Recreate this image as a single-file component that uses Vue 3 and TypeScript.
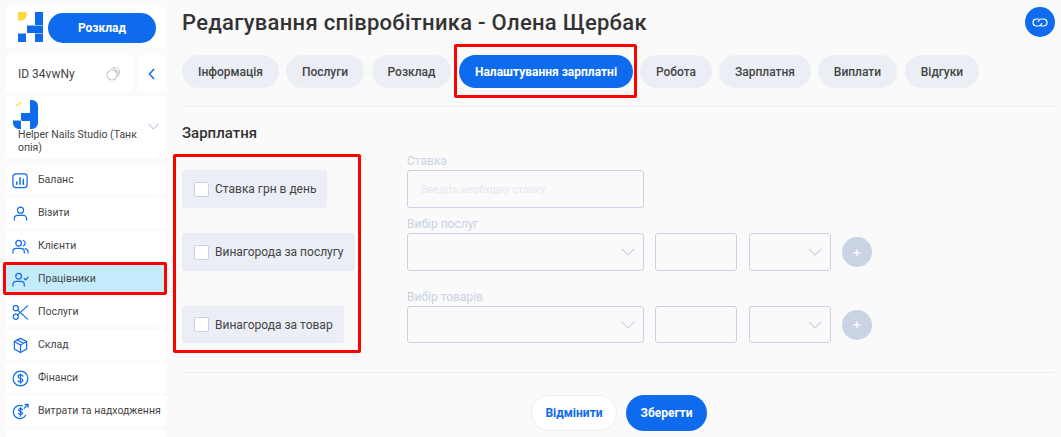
<script setup lang="ts">
const tabs = [
  { label: 'Інформація', width: 97 },
  { label: 'Послуги', width: 78 },
  { label: 'Розклад', width: 79 },
  { label: 'Налаштування зарплатні', width: 174, active: true },
  { label: 'Робота', width: 72 },
  { label: 'Зарплатня', width: 92 },
  { label: 'Виплати', width: 79 },
  { label: 'Відгуки', width: 74 },
]

const nav = [
  { label: 'Баланс', icon: 'chart' },
  { label: 'Візити', icon: 'user' },
  { label: 'Клієнти', icon: 'users' },
  { label: 'Працівники', icon: 'staff', active: true },
  { label: 'Послуги', icon: 'scissors' },
  { label: 'Склад', icon: 'box' },
  { label: 'Фінанси', icon: 'dollar' },
  { label: 'Витрати та надходження', icon: 'flow' },
  { label: '', icon: '' },
]

const rows = ['Вибір послуг', 'Вибір товарів']
</script>

<template>
  <div class="page">
    <aside class="side">
      <div class="card top">
        <svg class="logo" width="25" height="30" viewBox="0 0 25 30">
          <path d="M0 0h8.500v3.500a5 5 0 0 1-5 5H0z" fill="#fbd93c" />
          <rect x="17" y="0" width="8" height="13" fill="#0f6bee" />
          <rect x="9" y="13.500" width="16" height="7.500" fill="#0f6bee" />
          <rect x="0" y="21.500" width="8" height="8.500" fill="#0f6bee" />
          <rect x="17" y="21.500" width="8" height="8.500" fill="#0f6bee" />
        </svg>
        <button class="schedule" type="button">Розклад</button>
      </div>
      <div class="id-row">
        <div class="card id-card">
          <span>ID 34vwNy</span>
          <svg width="15" height="15" viewBox="0 0 15 15" fill="none" stroke="#c4cbd6" stroke-width="1.200">
            <circle cx="6" cy="9" r="5" />
            <path d="M5 3.500A5 5 0 0 1 9 1.500a4.500 4.500 0 0 1 4.500 4.500 5 5 0 0 1-2 4" />
            <path d="M8 2.500l3 3.500M10 4.500l2.500 2.500" />
          </svg>
        </div>
        <div class="card back">
          <svg width="8" height="12" viewBox="0 0 8 12" fill="none" stroke="#0f6bee" stroke-width="1.500"><path d="M6 1L1.500 6 6 11" /></svg>
        </div>
      </div>
      <div class="card studio">
        <div class="studio-text">
          <svg width="25" height="29" viewBox="0 0 25 29">
            <path d="M17 0h2a6 6 0 0 1 6 6v17a6 6 0 0 1-6 6h-2v-8H8v8H6a6 6 0 0 1-6-6v-3h8v-7h9z" fill="#0f6bee" />
            <path d="M3 6l5-4" stroke="#fbd93c" stroke-width="1.500" />
            <path d="M8 21v-1M0 20h8" stroke="#fff" />
          </svg>
          <p>Helper Nails Studio (Танк опія)</p>
        </div>
        <svg class="studio-arrow" width="11" height="7" viewBox="0 0 11 7" fill="none" stroke="#c9d3e3" stroke-width="1.200"><path d="M.5 1l5 5 5-5" /></svg>
      </div>
      <nav class="nav">
        <a v-for="item in nav" :key="item.label" class="nav-item" :class="{ active: item.active }">
          <svg width="17" height="17" viewBox="0 0 18 18" fill="none" stroke="#0f6bee" stroke-width="1.300" stroke-linecap="round" stroke-linejoin="round">
            <template v-if="item.icon === 'chart'">
              <rect x="1" y="2" width="15" height="14.500" rx="3" />
              <path d="M5 13v-2.500M8.500 13V6M12 13V8" stroke-width="1.600" />
            </template>
            <template v-else-if="item.icon === 'user'">
              <circle cx="9" cy="5.500" r="3.200" />
              <path d="M2.500 16v-1.500a3.500 3.500 0 0 1 3.500-3.500h6a3.500 3.500 0 0 1 3.500 3.500V16" />
            </template>
            <template v-else-if="item.icon === 'users'">
              <circle cx="7" cy="5.500" r="3" />
              <path d="M1 16v-1.500A3.500 3.500 0 0 1 4.500 11h5a3.500 3.500 0 0 1 3.500 3.500V16" />
              <path d="M12 2.700a3 3 0 0 1 0 5.600M14 11.200a3.500 3.500 0 0 1 3 3.300V16" />
            </template>
            <template v-else-if="item.icon === 'staff'">
              <circle cx="7" cy="5.500" r="3" />
              <path d="M1 16v-1.500A3.500 3.500 0 0 1 4.500 11h5a3.500 3.500 0 0 1 3.500 3.500V16" />
              <path d="M13 8l1.500 1.500L17 6.500" />
            </template>
            <template v-else-if="item.icon === 'scissors'">
              <circle cx="4" cy="4.500" r="2.700" />
              <circle cx="4" cy="13.500" r="2.700" />
              <path d="M6 6.500L16.500 16M6 11.500L16.500 2" />
            </template>
            <template v-else-if="item.icon === 'box'">
              <path d="M9 1.500l6.500 3.200v8L9 16.500l-6.500-3.800v-8z" />
              <path d="M2.500 4.700L9 8.500l6.500-3.800M9 8.500v8M5.500 3l6.500 3.700" />
            </template>
            <template v-else-if="item.icon === 'dollar'">
              <circle cx="9" cy="9" r="7.800" />
              <path d="M11.500 6.500C11 5.500 10 5.200 9 5.200c-1.500 0-2.500.8-2.500 1.900 0 2.600 5 1.200 5 3.800 0 1.100-1 1.900-2.500 1.900-1.100 0-2-.4-2.500-1.300M9 4v10" />
            </template>
            <template v-else-if="item.icon === 'flow'">
              <path d="M11 3a7 7 0 0 0-7.500 1.500 7 7 0 0 0 0 10 7 7 0 0 0 11-1.500" />
              <path d="M11 7c-.4-.8-1-1-2-1-1.200 0-2 .6-2 1.500 0 2 4.200 1 4.200 3 0 .9-.9 1.500-2.200 1.500-1 0-1.700-.3-2-1M9 5v9" />
              <path d="M13 5.500L17 1.500M14 1.500h3v3" />
            </template>
          </svg>
          <span>{{ item.label }}</span>
        </a>
      </nav>
    </aside>

    <main class="main">
      <header class="head">
        <h1>Редагування співробітника - Олена Щербак</h1>
        <button class="link-btn" type="button" aria-label="Посилання">
          <svg width="16" height="9" viewBox="0 0 16 9" fill="none" stroke="#fff" stroke-width="1.200" stroke-linecap="round">
            <path d="M6.800 1H4.500a3.500 3.500 0 0 0 0 7h2a3.500 3.500 0 0 0 3.200-2.500" />
            <path d="M9.200 8h2.300a3.500 3.500 0 0 0 0-7h-2a3.500 3.500 0 0 0-3.200 2.500" />
          </svg>
        </button>
      </header>

      <div class="tabs">
        <button
          v-for="tab in tabs"
          :key="tab.label"
          type="button"
          class="tab"
          :class="{ active: tab.active }"
          :style="{ width: tab.width + 'px' }"
        >
          {{ tab.label }}
          <span v-if="tab.active" class="mark mark-tab"></span>
        </button>
      </div>

      <section class="salary">
        <h2>Зарплатня</h2>
        <div class="salary-grid">
          <div class="checks">
            <span class="mark mark-checks"></span>
            <label class="check"><i></i>Ставка грн в день</label>
            <label class="check c2"><i></i>Винагорода за послугу</label>
            <label class="check c3"><i></i>Винагорода за товар</label>
          </div>
          <div class="fields">
            <div class="field-label">Ставка</div>
            <div class="box rate">Введіть необхідну ставку</div>
            <div v-for="title in rows" :key="title" class="group">
              <div class="field-label">{{ title }}</div>
              <div class="row">
                <div class="box wide">
                  <svg width="14" height="8" viewBox="0 0 14 8" fill="none" stroke="#c9d3e3" stroke-width="1.200"><path d="M1 1l6 6 6-6" /></svg>
                </div>
                <div class="box num"></div>
                <div class="box num">
                  <svg width="14" height="8" viewBox="0 0 14 8" fill="none" stroke="#c9d3e3" stroke-width="1.200"><path d="M1 1l6 6 6-6" /></svg>
                </div>
                <button class="plus" type="button">+</button>
              </div>
            </div>
          </div>
        </div>
      </section>

      <footer class="foot">
        <button class="cancel" type="button">Відмінити</button>
        <button class="save" type="button">Зберегти</button>
      </footer>
    </main>
    <span class="nav-mark"></span>
  </div>
</template>

<style>
html, body {
  margin: 0;
  background: #fafafa;
  overflow: hidden;
}
</style>

<style scoped>
.page {
  position: relative;
  display: flex;
  width: 1061px;
  height: 437px;
  overflow: hidden;
  background: #fafafa;
  color: #333;
  font-family: Roboto, "Liberation Sans", sans-serif;
}
.side {
  width: 162px;
  margin-left: 5px;
  padding-top: 7px;
  flex-shrink: 0;
}
.card {
  background: #fff;
  border-radius: 4px;
}
.top {
  height: 41px;
  display: flex;
  align-items: center;
  gap: 5px;
  padding-left: 13px;
}
.logo {
  margin-top: -1px;
}
.schedule {
  width: 108px;
  height: 30px;
  border: none;
  border-radius: 15px;
  background: #0f6bee;
  color: #fff;
  font: 700 12px Roboto, sans-serif;
}
.id-row {
  display: flex;
  gap: 4px;
  margin-top: 7px;
}
.id-card {
  width: 128px;
  height: 37px;
  display: flex;
  align-items: center;
  justify-content: space-between;
  padding: 0 12px 0 13px;
  box-sizing: border-box;
  font-size: 12px;
  color: #444;
}
.back {
  width: 30px;
  height: 37px;
  display: flex;
  align-items: center;
  justify-content: center;
}
.studio {
  position: relative;
  height: 62px;
  margin-top: 4px;
  padding: 4px 20px 0 8px;
  box-sizing: border-box;
}
.studio svg {
  display: block;
}
.studio-text {
  width: 125px;
}
.studio p {
  margin: 0 0 0 5px;
  font-size: 10.500px;
  line-height: 12.500px;
  color: #444;
  word-break: break-all;
}
.studio-arrow {
  position: absolute;
  right: 8px;
  top: 27px;
}
.nav {
  display: flex;
  flex-direction: column;
  gap: 3px;
  margin-top: 7px;
}
.nav-item {
  height: 30px;
  flex-shrink: 0;
  display: flex;
  align-items: center;
  gap: 9px;
  padding-left: 7px;
  background: #fff;
  border-radius: 4px;
  font-size: 10.500px;
  color: #444;
  white-space: nowrap;
}
.nav-item svg {
  flex-shrink: 0;
}
.nav-item span {
  margin-top: -2px;
}
.nav-item.active {
  background: #c5ecfd;
  border-radius: 0;
}
.nav-mark {
  position: absolute;
  left: 3px;
  top: 262px;
  width: 164px;
  height: 33px;
  box-sizing: border-box;
  border: 3px solid #f00;
  border-radius: 2px;
}
.main {
  flex: 1;
  min-width: 0;
  margin: 0 6px 0 15px;
}
.head {
  height: 44px;
  display: flex;
  align-items: center;
  justify-content: space-between;
}
h1 {
  margin: 0;
  font-size: 22px;
  font-weight: 500;
  color: #333;
  letter-spacing: 0.28px;
}
.link-btn {
  width: 30px;
  height: 30px;
  display: flex;
  align-items: center;
  justify-content: center;
  padding: 0;
  border: none;
  border-radius: 50%;
  background: #0f6bee;
}
.tabs {
  display: flex;
  gap: 7px;
  margin-top: 11px;
  padding-bottom: 18px;
  border-bottom: 1px solid #eee;
}
.tab {
  position: relative;
  height: 33px;
  padding: 0;
  border: none;
  border-radius: 17px;
  background: #ebeff5;
  color: #444;
  font: 500 12px Roboto, sans-serif;
  white-space: nowrap;
}
.tab:nth-child(3),
.tab:nth-child(4),
.tab:nth-child(8) {
  margin-left: 1px;
}
.tab.active {
  background: #0f6bee;
  color: #fff;
  font-weight: 700;
}
.mark {
  position: absolute;
  box-sizing: border-box;
  border: 3px solid #f00;
  border-radius: 2px;
}
.mark-tab {
  left: -5px;
  top: -11px;
  width: 183px;
  height: 54px;
}
.salary {
  height: 249px;
  border-bottom: 1px solid #eee;
  box-sizing: border-box;
}
h2 {
  margin: 17px 0 0;
  height: 18px;
  font-size: 15px;
  line-height: 18px;
  font-weight: 500;
  color: #333;
}
.salary-grid {
  display: flex;
  margin-top: 12px;
}
.checks {
  position: relative;
  width: 225px;
  padding-top: 16px;
  flex-shrink: 0;
}
.mark-checks {
  left: -9px;
  top: 0;
  width: 188px;
  height: 199px;
}
.check {
  display: flex;
  align-items: center;
  width: max-content;
  gap: 6px;
  height: 38px;
  padding: 0 11px 0 12px;
  box-sizing: border-box;
  background: #ebeff5;
  border-radius: 3px;
  font-size: 12px;
  color: #444;
}
.check i {
  width: 15px;
  height: 15px;
  box-sizing: border-box;
  background: #fff;
  border: 1px solid #c9d3e3;
  border-radius: 2px;
}
.c2 {
  margin-top: 25px;
}
.c3 {
  margin-top: 35px;
  height: 37px;
}
.fields {
  flex: 1;
}
.field-label {
  height: 16px;
  font-size: 12px;
  line-height: 14px;
  color: #c9d3e3;
}
.box {
  display: flex;
  align-items: center;
  justify-content: flex-end;
  height: 38px;
  box-sizing: border-box;
  padding-right: 8px;
  border: 1px solid #c9d3e3;
  border-radius: 3px;
}
.rate {
  width: 237px;
  justify-content: flex-start;
  padding-left: 13px;
  font-size: 10.500px;
  color: #e3e7f0;
}
.group {
  margin-top: 9px;
}
.group + .group {
  margin-top: 19px;
}
.group + .group .box {
  height: 37px;
}
.row {
  display: flex;
  align-items: center;
}
.wide {
  width: 237px;
}
.num {
  width: 82px;
  margin-left: 11px;
}
.num + .num {
  margin-left: 12px;
}
.plus {
  width: 30px;
  height: 30px;
  margin-left: 11px;
  padding: 0;
  border: none;
  border-radius: 50%;
  background: #c9d3e3;
  color: #fff;
  font: 400 13px Roboto, sans-serif;
}
.foot {
  display: flex;
  justify-content: center;
  gap: 9px;
  margin-top: 22px;
  padding-left: 1px;
}
.cancel, .save {
  height: 36px;
  padding: 0;
  border-radius: 18px;
  font: 700 12px Roboto, sans-serif;
}
.cancel {
  width: 86px;
  background: #fff;
  border: 1px solid #eee;
  color: #0f6bee;
}
.save {
  width: 81px;
  border: none;
  background: #0f6bee;
  color: #fff;
}
</style>
